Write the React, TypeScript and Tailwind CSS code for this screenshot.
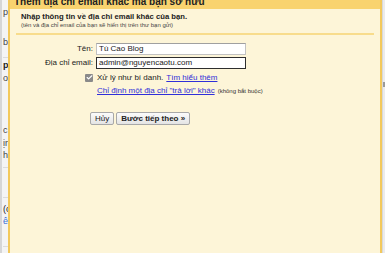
import { Check } from 'lucide-react';

export default function App() {
  return (
    <div className="flex h-[253px] w-[385px] overflow-hidden bg-white text-[8px] text-black [font-family:'Liberation_Sans',Arial,sans-serif]">
      {/* gmail page behind the dialog */}
      <div className="flex w-[8px] shrink-0 flex-col overflow-hidden border-l-2 border-[#d6d6d6] bg-[#f4f4f4] pl-[1px] text-[9px] leading-[12px] whitespace-nowrap text-[#444]">
        <div className="h-[58px] shrink-0 border-b border-[#dcdcdc]">
          <div className="mt-[6px]">p</div>
          <div className="mt-[18px]">bạn</div>
        </div>
        <div className="h-[110px] shrink-0 border-b border-[#dcdcdc]">
          <div className="mt-[1px] font-bold text-[#222]">p</div>
          <div className="mt-[1px]">os</div>
          <div className="mt-[40px]">c</div>
          <div className="mt-[1px]">ịn</div>
          <div className="mt-0">hi</div>
        </div>
        <div className="h-[30px] shrink-0 border-b border-[#dcdcdc]" />
        <div className="h-[49px] shrink-0 border-b border-[#dcdcdc]">
          <div className="mt-[5px] text-[#222]">(c</div>
          <div className="text-[#3b6fd6]">ên</div>
        </div>
      </div>

      {/* dialog */}
      <div className="flex w-[374px] shrink-0 flex-col border-x-2 border-[#f3c95c] bg-[#fdf5d8]">
        <div className="h-[9px] shrink-0 overflow-hidden bg-[#f9d36f]">
          <div className="-mt-[4px] pl-[4px] text-[10px] font-bold leading-[12px] whitespace-nowrap text-[#222]">
            Thêm địa chỉ email khác mà bạn sở hữu
          </div>
        </div>

        <div className="px-[6px] pt-[3px]">
          <div className="pl-[5px]">
            <div className="text-[7.7px] font-bold leading-[10px] text-[#222]">
              Nhập thông tin về địa chỉ email khác của bạn.
            </div>
            <div className="text-[6px] leading-[7px] text-[#444]">
              (tên và địa chỉ email của bạn sẽ hiển thị trên thư bạn gửi)
            </div>
          </div>
          <div className="mt-[4px] h-[2px] w-full bg-[#f8dc8c]" />

          <div className="mt-[8px] grid grid-cols-[77px_auto] items-center gap-x-[3px] gap-y-[2px] text-[8px] leading-[10px] text-[#222]">
            <div className="text-right">Tên:</div>
            <div className="flex h-[12px] w-[150px] items-center border border-[#c2c2c2] border-t-[#a0a0a0] bg-white pl-[2px]">
              Tú Cao Blog
            </div>
            <div className="text-right">Địa chỉ email:</div>
            <div className="flex h-[12px] w-[150px] items-center border border-[#2e2e2e] bg-white pl-[2px]">
              admin@nguyencaotu.com
            </div>
          </div>

          <div className="mt-[3px] flex h-[11px] items-center pl-[69px] text-[8px] leading-[10px]">
            <span className="flex h-[8px] w-[8px] items-center justify-center rounded-[1px] bg-[#8a8a8a]">
              <Check className="h-[7px] w-[7px] text-white" strokeWidth={4} />
            </span>
            <span className="ml-[4px] text-[#222]">Xử lý như bí danh.</span>
            <a className="ml-[3px] text-[#2f2fd9] underline">Tìm hiểu thêm</a>
          </div>
          <div className="mt-[2px] flex items-baseline pl-[81px] leading-[11px]">
            <a className="text-[8px] text-[#2f2fd9] underline">Chỉ định một địa chỉ "trả lời" khác</a>
            <span className="ml-[3px] text-[6px] text-[#333]">(không bắt buộc)</span>
          </div>

          <div className="mt-[15px] flex gap-[2px] pl-[74px]">
            <button className="h-[13px] rounded-[2px] border border-[#a8a8a8] bg-gradient-to-b from-[#fbfbfb] to-[#e4e4e4] px-[4px] text-[8px] leading-[11px] text-[#222]">
              Hủy
            </button>
            <button className="h-[13px] rounded-[2px] border border-[#a8a8a8] bg-gradient-to-b from-[#fbfbfb] to-[#e4e4e4] px-[4px] text-[8px] font-bold leading-[11px] text-[#222]">
              Bước tiếp theo »
            </button>
          </div>
        </div>
      </div>

      <div className="flex flex-1 flex-col border-l border-[#d8d8d8] bg-[#ececec]">
        <div className="mt-[82px] h-[5px] w-[2px] bg-[#9a9a9a]" />
      </div>
    </div>
  );
}
